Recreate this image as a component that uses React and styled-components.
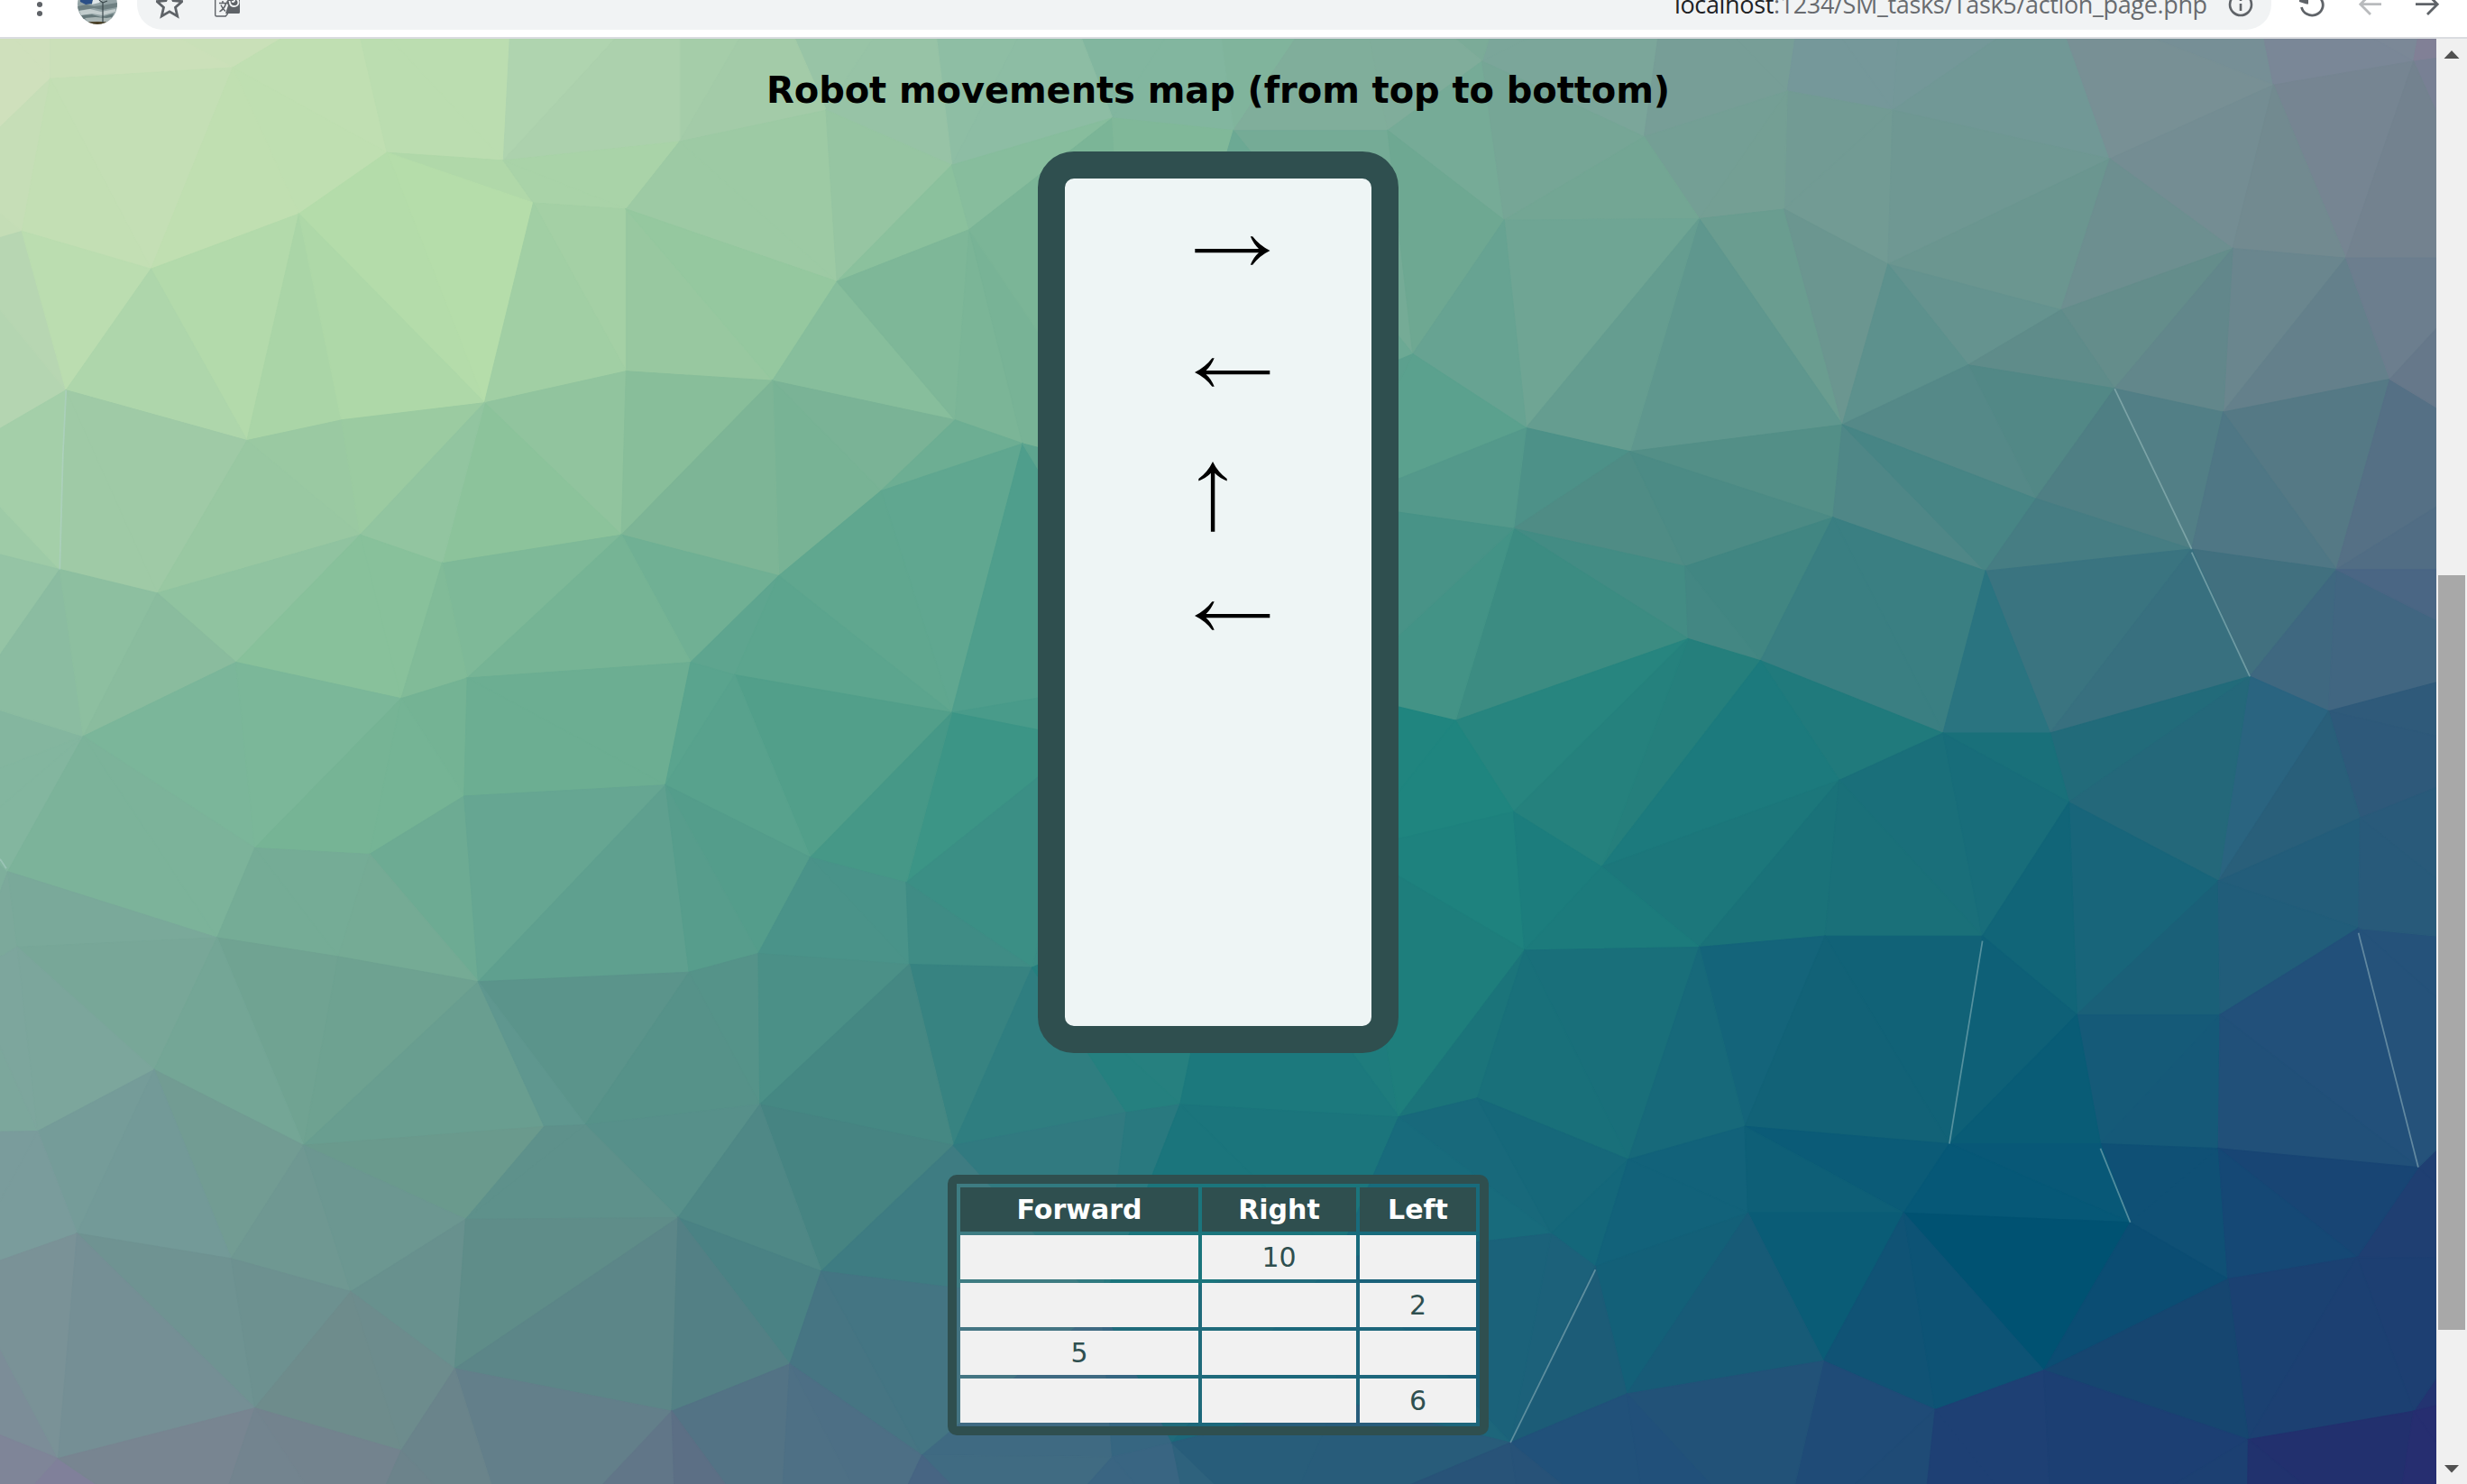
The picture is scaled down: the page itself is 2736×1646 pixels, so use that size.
import React from "react";
import styled, { createGlobalStyle } from "styled-components";

const GlobalStyle = createGlobalStyle`
  html, body { margin: 0; padding: 0; overflow: hidden; }
  body { font-family: Verdana, "DejaVu Sans", sans-serif; background: #fff; }
`;

const Screen = styled.div`
  display: flex;
  flex-direction: column;
  width: 2736px;
  height: 1646px;
  overflow: hidden;
`;

/* ---------- browser toolbar ---------- */

const Toolbar = styled.header`
  display: flex;
  align-items: flex-start;
  flex: none;
  box-sizing: border-box;
  height: 43px;
  overflow: hidden;
  background: #fff;
  border-bottom: 2px solid #dadce0;
`;

const ToolbarGlyph = styled.svg`
  display: block;
  flex: none;
  width: ${(p) => p.$w}px;
  height: 41px;
  margin-left: ${(p) => p.$gap || 0}px;
`;

const AddressBar = styled.div`
  display: flex;
  align-items: flex-start;
  flex: none;
  width: 2367px;
  height: 33px;
  margin-left: 22px;
  background: #f1f3f4;
  border-radius: 0 0 28px 28px;
  overflow: hidden;
`;

const Url = styled.span`
  flex: none;
  width: 595px;
  margin: -19px 0 0 auto;
  font: 27px/48px "Open Sans", "Noto Sans", sans-serif;
  letter-spacing: -0.35px;
  white-space: nowrap;
  color: #686b6f;
`;

const Host = styled.span`
  color: #202124;
`;

/* ---------- page ---------- */

const Viewport = styled.div`
  display: flex;
  flex: 1;
  min-height: 0;
`;

const Page = styled.main`
  display: grid;
  width: 2702px;
  height: 1603px;
  overflow: hidden;
`;

const Backdrop = styled.svg`
  grid-area: 1 / 1;
  display: block;
  width: 2702px;
  height: 1603px;
`;

const Content = styled.div`
  grid-area: 1 / 1;
  z-index: 1;
  display: flex;
  flex-direction: column;
  align-items: center;
`;

const Title = styled.h2`
  margin: 32px 0 0;
  height: 93px;
  font: bold 40px/50px Verdana, "DejaVu Sans", sans-serif;
  letter-spacing: -0.08px;
  white-space: nowrap;
  color: #000;
`;

const Board = styled.section`
  box-sizing: border-box;
  flex: none;
  width: 400px;
  height: 1000px;
  padding: 12.5px 0 0 143px;
  background: #eef5f5;
  border: 30px solid #2f4f4f;
  border-radius: 40px;
`;

const Move = styled.div`
  display: flex;
  align-items: center;
  box-sizing: border-box;
  height: 135px;
  padding: ${(p) => (p.$upright ? "6px 0 0 4.500px" : "0 0 0 1px")};
`;

const MoveArrow = styled.svg`
  display: block;
  flex: none;
`;

const MovesTable = styled.table`
  box-sizing: border-box;
  table-layout: fixed;
  width: 600px;
  margin-top: 135px;
  border: 10px solid #2f4f4f;
  border-radius: 10px;
  border-spacing: 4px;
  border-collapse: separate;
  text-align: center;
`;

const HeadCell = styled.th`
  box-sizing: border-box;
  width: ${(p) => p.$w}px;
  height: 49px;
  padding: 0;
  background: #2f4f4f;
  color: #fff;
  font: bold 30px/49px Verdana, "DejaVu Sans", sans-serif;
`;

const Cell = styled.td`
  box-sizing: border-box;
  height: 49px;
  padding: 0;
  background: #f1f1f1;
  color: #2f4f4f;
  font: 30px/49px Verdana, "DejaVu Sans", sans-serif;
`;

/* ---------- scrollbar ---------- */

const Scrollbar = styled.aside`
  display: flex;
  flex-direction: column;
  align-items: center;
  flex: none;
  width: 34px;
  background: #f0f0f0;
`;

const Thumb = styled.div`
  width: 30px;
  height: 837px;
  margin: 561px 0 auto;
  background: #a8a8a8;
`;

const ScrollArrow = styled.svg`
  display: block;
  flex: none;
  width: 34px;
  height: 34px;
`;

/* ---------- low-poly backdrop ---------- */

const VERTICES = `-40,-30 32,-20 223,-2 328,-53 432,-20 490,-10 589,-27 670,-20 770,-20 860,-30 960,-20 1060,-20 1146,-10 1210,-20 1305,0 1430,-20 1545,-20 1600,30
-30,110 -30,160 -30,290 -30,345 -20,445 -30,500 -20,530 -20,620 -30,720 -25,810 -30,900 -20,990
32,50 148,43 246,97 320,102 432,90 339,129 398,133 190,136 96,171 14,147 42,248 157,280 217,267 308,256 398,236 491,242 532,179 525,70 605,105 616,146 607,267 650,282 560,312 495,366 395,340 281,358 229,340 100,377 38,362 150,421 53,468 255,444 297,431 439,421 467,429 605,453 707,75
784,83 882,83 942,39 1045,87 1136,58 1203,70 956,140 1080,139 1134,133 1200,168 1341,101 1445,54 1534,39 1419,158 1491,164 1310,197 1251,232 1344,247 1413,262 1519,241 1171,270 1036,287 970,272 898,225 962,336 1165,329 1294,317 1393,349 1262,363 1485,362 1071,360 1073,406 1119,420 925,458 1235,466 1303,466 1430,430 1480,452
1590,164 1600,290 1590,362 1600,420 1600,480 1600,600 1600,680 1600,800 1600,880 1600,990
720,300 850,320 740,430 690,470 850,440 780,560 860,540
5,554 11,602 162,539 235,543 295,506 423,499 515,545 576,561 138,596 215,608 304,624 438,618 482,606 578,613 656,615 98,680 193,728 24,719 346,716 372,715 483,702 606,728 716,707 750,702 49,784 147,800 223,821 296,775 431,774 522,808 289,870 502,867 427,897 162,895 37,927 255,922 586,925 707,926 745,917
962,516 1018,551 1169,496 1315,510 1410,560 1500,520 969,604 1080,602 1160,595 1260,595 1320,645 1411,645 1499,590 939,698 889,710 1035,737 1109,716 1239,727 1335,727 1410,730 1537,742 986,784 1014,805 1111,771 1210,771 1354,777 1416,813 1498,799 1159,865 1230,896 1299,871 1034,886 960,917 1429,915 1534,897
850,800 700,830 130,990 225,990 330,1000 430,990 495,990 560,980 650,990 760,990 850,890 810,980 970,990 1050,990 1130,990 1220,990 1305,990 1428,980 1520,990`
  .split(/\s+/)
  .map((pair) => pair.split(",").map(Number));

const SWATCHES = `20,35,cfe0bc 90,35,cbe0b9 200,50,c0dfb2 60,110,c3dfb4 280,50,bbddb0 370,60,b0d5b0 410,50,abd0ac 470,60,a3cba8 560,60,97c3a6 650,60,8dbda4 740,50,82b69f 800,50,80b49c 870,40,80ad9b 930,60,7aab97 1000,50,7ba69a 1090,50,779e97 1180,45,75989a 1240,50,749899 1300,60,719896 1360,50,789095 1395,60,758f96 1402,104,748d93 1452,125,728a90 1475,30,7a8797 1500,35,7b8897 1490,86,768592 1535,120,73828f 1560,80,788094 1550,35,818096
150,100,c0dfb1 8,100,c6deb7 290,115,b0d8a9 220,150,b5ddaa 330,190,b2daa9 380,110,a9d3a8 470,130,9dcaa4 560,120,96c5a2 640,110,87bd9d 590,160,8ac19d 690,100,80b998 920,100,76ab97 930,170,6ea892 1010,110,73a694 1120,100,749f94 1170,110,729b94 1260,110,6f9893 1357,152,6d8f90 1284,155,6b9690
10,200,b7d6b2 45,190,bbddb0 90,220,aed6ab 140,200,b3daab 210,210,aad5a7 250,195,b2dba9 280,160,b5ddaa 270,250,a7d2a6 350,200,a1cfa4 430,190,98c8a0 470,190,95c89f 530,220,87bf9c 570,230,84bb9a 600,200,7eb798 640,200,78b396 910,200,6da994 940,220,67a392 1000,190,6fa594 1080,220,5f978e 1115,180,6a9d90 1170,200,6b9690 1210,220,5d918d 1260,200,65938f 1302,225,5f8c8a 1358,201,648d8b 1392,222,62878b 1441,192,6a868e 1474,221,64808b 1510,200,6d7f8e 1540,230,66788a
15,280,a5d0aa 30,320,a1cda7 70,310,9fcaa6 120,330,9ecaa5 180,330,99c8a2 250,300,9bcba1 270,330,92c5a0 340,300,8cc39b 370,270,91c49e 430,270,88be9a 450,300,7db596 520,290,78b395 560,270,7ab396 600,290,6dae93 540,340,62a990 620,350,60a790 640,400,4f9e8c 930,290,559a8b 900,270,5ba18e 940,340,4a9287 990,300,4d9188 1040,340,4f8c85 1110,290,538f87 1130,340,4f8a84 1200,300,4f8787 1240,270,558988 1300,265,528886 1340,290,4f7f84 1385,286,527f86 1440,310,4f7785 1472,288,557985 1520,310,547084 1545,270,5e7089
10,370,97c5a5 20,400,8cbda2 60,420,8dbfa0 110,420,8abc9e 170,370,90c3a0 240,400,88c19b 300,390,80ba98 360,390,76b495 430,400,72b194 480,400,5ea58f 550,400,60a78f 560,440,529f8b 940,400,439386 1000,400,3c8c82 1040,370,438c84 1090,370,458883 1118,370,418682 1130,380,388082 1200,400,3a7f82 1240,336,478585 1310,343,467d83 1270,420,2a7480 1330,400,3a7480 1375,410,38707f 1420,380,41707f 1450,415,3f6880 1500,400,3f6680 1530,380,4a6684
15,460,84b69f 30,500,83b69f 80,520,7cb39a 110,470,7bb69a 200,460,7bb799 250,500,75b495 340,450,6cae92 380,470,6cae92 290,460,74b394 450,460,5aa48e 530,460,529f8a 560,500,469887 620,490,3c9586 360,530,66a692 400,570,5fa08f 290,560,6dab93 230,590,75ab95 180,570,75ac96 470,530,55a08c 490,560,539b8b 530,580,4a9389 620,580,3a8f85 600,600,3f8c85
920,500,1f857f 980,460,27857f 1030,430,1c807c 1060,480,267f7c 1100,480,1c7a7d 1180,470,207a7c 1270,490,19707a 1330,480,226b7a 1360,520,24687a 1440,470,2a6480 1450,520,295f7a 1500,460,33617a 1540,480,2e597a 930,560,1e827e 990,560,1c7d7d 1060,550,1c777b 1140,560,1a7279 1200,560,1a7079 1260,560,15687a 1290,580,116578 1340,600,17657a 1380,620,1a6078 1450,580,215d7a 1520,560,285a7a
20,660,7da69d 80,640,78a798 60,620,7aa89a 15,680,7ca79c 120,650,74a696 200,660,70a392 270,680,699e90 340,660,5f978f 400,660,589288 460,660,559389 520,650,4b9087 550,700,458883 640,650,358583 610,650,378381 650,700,2f7e80 700,690,25807f 760,690,1c7d7d 850,690,1b767c 920,620,1e7e7c 950,650,1b747a 1000,660,19707a 1070,660,17697a 1130,660,14647a 1180,650,126277 1220,680,116177 1280,640,0e6077 1290,690,095c76 1360,680,155a78 1440,660,1d5077 1470,680,22507a 1530,640,25527a
10,730,7a9c9c 8,765,7a9c9c 30,750,769c99 90,740,739a98 110,780,739b96 160,760,729c93 220,770,6c9791 270,740,6a9a8d 350,760,5e918b 400,740,569088 430,730,57908a 470,760,4f8886 540,760,468482 580,770,3e7c82 650,740,337c80 680,730,2f7880 780,740,1a757c 900,740,186b7c 960,740,18697b 1000,760,14677a 1060,770,12627a 1140,740,0e5f77 1180,750,0b5b77 1270,760,065877 1380,760,0f5075 1450,770,154875 1510,780,1b4273 1540,760,1f3f72
5,820,7a9297 20,832,7a9297 3,860,7c8f98 8,890,7c8d98 83,868,758f95 119,826,6f9392 177,839,6d9190 191,865,6f8b8b 236,870,6d8c8d 222,830,6f918e 269,822,68918e 339,806,5f8d89 382,847,5c8688 453,846,538085 485,816,4a8284 560,850,447583 550,820,437a84 5,925,7f8598 30,940,80809a 110,930,788591 195,932,73848f 240,938,727f8c 270,918,6a848b 330,905,637f8a 400,935,617688 440,935,5c6f85 475,900,537385 530,905,4e7085 590,938,476583 700,925,3a6582 640,915,406b82 750,850,206b7b 840,850,1b687b 840,925,285c7a 960,935,285278 990,850,1c617a 1010,870,1c5c77 1040,830,136078 1100,850,175b77 1150,820,0a5c76 1220,850,105375 1280,830,005272 1350,830,0b4d73 1400,860,164670 1460,870,1c4072 1500,930,22306e 1540,920,262e70 1050,920,21507a 1120,900,225278 1190,900,1f4a77 1260,920,1e4074 1360,900,1c4072 1330,930,1c3f73 1150,930,204c76`
  .split(/\s+/)
  .map((entry) => {
    const [x, y, hex] = entry.split(",");
    return {
      x: Number(x),
      y: Number(y),
      rgb: [0, 2, 4].map((i) => parseInt(hex.slice(i, i + 2), 16)),
    };
  });

const GLINTS = [
  "42,248 40,290 38,362",
  "1344,247 1393,349",
  "1393,351 1430,430",
  "1260,598 1239,727",
  "1499,593 1537,742",
  "1335,730 1354,777",
  "1014,807 960,917",
  "0,546 4,552",
];

function circumcircle(points, tri) {
  const [[ax, ay], [bx, by], [cx, cy]] = tri.map((i) => points[i]);
  const d = 2 * (ax * (by - cy) + bx * (cy - ay) + cx * (ay - by));
  const a2 = ax * ax + ay * ay;
  const b2 = bx * bx + by * by;
  const c2 = cx * cx + cy * cy;
  const x = (a2 * (by - cy) + b2 * (cy - ay) + c2 * (ay - by)) / d;
  const y = (a2 * (cx - bx) + b2 * (ax - cx) + c2 * (bx - ax)) / d;
  return { tri, x, y, r2: (ax - x) ** 2 + (ay - y) ** 2 };
}

function triangulate(vertices) {
  const n = vertices.length;
  const points = [...vertices, [-20000, -10000], [20000, -10000], [0, 30000]];
  let cells = [circumcircle(points, [n, n + 1, n + 2])];
  for (let i = 0; i < n; i++) {
    const [px, py] = points[i];
    const edges = new Map();
    const kept = [];
    cells.forEach((cell) => {
      if ((px - cell.x) ** 2 + (py - cell.y) ** 2 >= cell.r2) {
        kept.push(cell);
        return;
      }
      const [a, b, c] = cell.tri;
      [[a, b], [b, c], [c, a]].forEach((edge) => {
        const key = Math.min(...edge) + "-" + Math.max(...edge);
        if (edges.has(key)) edges.delete(key);
        else edges.set(key, edge);
      });
    });
    edges.forEach(([a, b]) => kept.push(circumcircle(points, [a, b, i])));
    cells = kept;
  }
  return cells
    .filter((cell) => cell.tri.every((i) => i < n))
    .map((cell) => cell.tri.map((i) => points[i]));
}

function colourAt(x, y) {
  const sum = [0, 0, 0];
  let total = 0;
  SWATCHES.forEach((s) => {
    const w = 1 / ((s.x - x) ** 2 + (s.y - y) ** 2 + 60) ** 2.5;
    total += w;
    s.rgb.forEach((v, i) => (sum[i] += v * w));
  });
  return `rgb(${sum.map((v) => Math.round(v / total)).join(",")})`;
}

const FACETS = triangulate(VERTICES).map((tri) => ({
  points: tri.map((p) => p.join(",")).join(" "),
  fill: colourAt(
    Math.min(1548, Math.max(0, (tri[0][0] + tri[1][0] + tri[2][0]) / 3)),
    Math.min(943, Math.max(24, (tri[0][1] + tri[1][1] + tri[2][1]) / 3))
  ),
}));

function LowPoly() {
  return (
    <Backdrop viewBox="0 24.64 1548.5 918.6" preserveAspectRatio="none">
      <rect x="0" y="0" width="1549" height="944" fill="#3a7f82" />
      {FACETS.map((f) => (
        <polygon key={f.points} points={f.points} fill={f.fill} stroke={f.fill} strokeWidth="0.7" />
      ))}
      {GLINTS.map((g) => (
        <polyline key={g} points={g} fill="none" stroke="#b9d6d6" strokeOpacity="0.42" strokeWidth="1" />
      ))}
    </Backdrop>
  );
}

function Avatar() {
  return (
    <ToolbarGlyph $w={44} $gap={39} viewBox="0 0 44 41">
      <clipPath id="face">
        <circle cx="22" cy="5" r="22" />
      </clipPath>
      <g clipPath="url(#face)">
        <rect width="44" height="41" fill="#93a3a5" />
        <path d="M3 0h14l-1 4-7 1-6-3z" fill="#2b4f86" />
        <path d="M17 0h10l-3 3-8 2z" fill="#dfe6e8" />
        <path d="M0 7l10-2 8 2 8-1 18-3v5l-16 3-10-2-18 3z" fill="#6f8082" />
        <path d="M2 12l12-2 12 3 16-3v3l-14 4-12-2-12 2z" fill="#c3cdcd" />
        <path d="M4 17l12-1 10 3 14-4-2 5-14 2-18-1z" fill="#66787a" />
        <path d="M8 20l12-1 12 1 6-1-4 5H12z" fill="#a9b5b4" />
        <path d="M6 25q16-2 32 0v6H6z" fill="#4b4026" />
        <path d="M28 3v22M28 3l-4-3M28 3l5-2" stroke="#39474b" strokeWidth="1.200" fill="none" />
      </g>
    </ToolbarGlyph>
  );
}

const ARROWS = {
  left: {
    w: 84,
    h: 32,
    d: "M0 16Q11.500 10.500 19.300.300H21.700Q18 9 12.500 13.900H83.300V18.300H12.500Q18 23 21.700 31.700H19.300Q11.500 21.500 0 16Z",
  },
  right: {
    w: 84,
    h: 32,
    d: "M83.500 16Q72 10.500 64.200.300H61.800Q65.500 9 71 13.900H.300V18.300H71Q65.500 23 61.800 31.700H64.200Q72 21.500 83.500 16Z",
  },
  up: {
    w: 32,
    h: 78,
    d: "M16 0Q10.500 11.500.300 19V21.400Q9 18 13.900 12.800V77.700H18.300V12.800Q23 18 31.700 21.400V19Q21.500 11.500 16 0Z",
  },
};

const MOVES = ["right", "left", "up", "left"];
const ROWS = [
  ["", "10", ""],
  ["", "", "2"],
  ["5", "", ""],
  ["", "", "6"],
];

export default function App() {
  return (
    <Screen>
      <GlobalStyle />
      <Toolbar>
        <ToolbarGlyph $w={6} $gap={41} viewBox="0 0 6 41" fill="#5f6368">
          <circle cx="3" cy="5" r="3.100" />
          <circle cx="3" cy="15" r="3.100" />
        </ToolbarGlyph>
        <Avatar />
        <AddressBar>
          <ToolbarGlyph $w={30} $gap={21} viewBox="0 0 30 41">
            <path
              d="M15-8.500l4.100 9.200 9.800.9-7.400 6.600 2.200 9.800-8.700-5.200-8.700 5.200 2.200-9.800L1.100 1.600l9.800-.9z"
              fill="none"
              stroke="#5f6368"
              strokeWidth="2.800"
            />
          </ToolbarGlyph>
          <ToolbarGlyph $w={30} $gap={34} viewBox="0 0 30 41">
            <path d="M1.700-6v22.500q0 1.500 1.500 1.500h10l2.500-3" fill="none" stroke="#5f6368" strokeWidth="1.400" />
            <path d="M20-6h8q1 0 1 2v17.500q0 1.500-1.500 1.500H13l3-9-2-4z" fill="#5f6368" />
            <path d="M6 3.500h9M10 1v2.500M6.500 13q6-4 7-9.500M8 5.500q2 4.500 5 7" fill="none" stroke="#5f6368" strokeWidth="1.500" />
            <path d="M17.500 1q.5 6 5 6t5-4q0-4-4-4.500M20 1.500q3 1.500 3-2" fill="none" stroke="#f1f3f4" strokeWidth="1.900" />
          </ToolbarGlyph>
          <Url>
            <Host>localhost</Host>:1234/SM_tasks/Task5/action_page.php
          </Url>
          <ToolbarGlyph $w={67} viewBox="0 0 67 41">
            <circle cx="33" cy="5" r="12" fill="none" stroke="#5f6368" strokeWidth="2.600" />
            <path d="M33 4v8M33-2v3" stroke="#5f6368" strokeWidth="2.600" />
          </ToolbarGlyph>
        </AddressBar>
        <ToolbarGlyph $w={30} $gap={30} viewBox="0 0 30 41">
          <path d="M3.500 8a12 11.500 0 1 0 5-12" fill="none" stroke="#5f6368" strokeWidth="2.800" />
          <path d="M1-8L11-8V4.500H9L1 2z" fill="#5f6368" />
        </ToolbarGlyph>
        <ToolbarGlyph $w={28} $gap={36} viewBox="0 0 28 41">
          <path d="M26 4.700H3M14-6.500L2.800 4.700 14 16" fill="none" stroke="#b9bbbd" strokeWidth="2.800" />
        </ToolbarGlyph>
        <ToolbarGlyph $w={28} $gap={36} viewBox="0 0 28 41">
          <path d="M0 4.700h24M13-6.500L24.200 4.700 13 16" fill="none" stroke="#5f6368" strokeWidth="2.800" />
        </ToolbarGlyph>
      </Toolbar>
      <Viewport>
        <Page>
          <LowPoly />
          <Content>
            <Title>Robot movements map (from top to bottom)</Title>
            <Board>
              {MOVES.map((name, i) => {
                const { w, h, d } = ARROWS[name];
                return (
                  <Move key={i} $upright={name === "up"}>
                    <MoveArrow width={w} height={h} viewBox={`0 0 ${w} ${h}`} role="img" aria-label={name}>
                      <path d={d} />
                    </MoveArrow>
                  </Move>
                );
              })}
            </Board>
            <MovesTable>
              <thead>
                <tr>
                  <HeadCell $w={264}>Forward</HeadCell>
                  <HeadCell $w={171}>Right</HeadCell>
                  <HeadCell $w={129}>Left</HeadCell>
                </tr>
              </thead>
              <tbody>
                {ROWS.map((row, r) => (
                  <tr key={r}>
                    {row.map((v, c) => (
                      <Cell key={c}>{v}</Cell>
                    ))}
                  </tr>
                ))}
              </tbody>
            </MovesTable>
          </Content>
        </Page>
        <Scrollbar>
          <ScrollArrow viewBox="0 0 34 34">
            <path d="M8.500 22l8.500-9 8.500 9z" fill="#505050" />
          </ScrollArrow>
          <Thumb />
          <ScrollArrow viewBox="0 0 34 34">
            <path d="M9 13h16l-8 8.500z" fill="#505050" />
          </ScrollArrow>
        </Scrollbar>
      </Viewport>
    </Screen>
  );
}
